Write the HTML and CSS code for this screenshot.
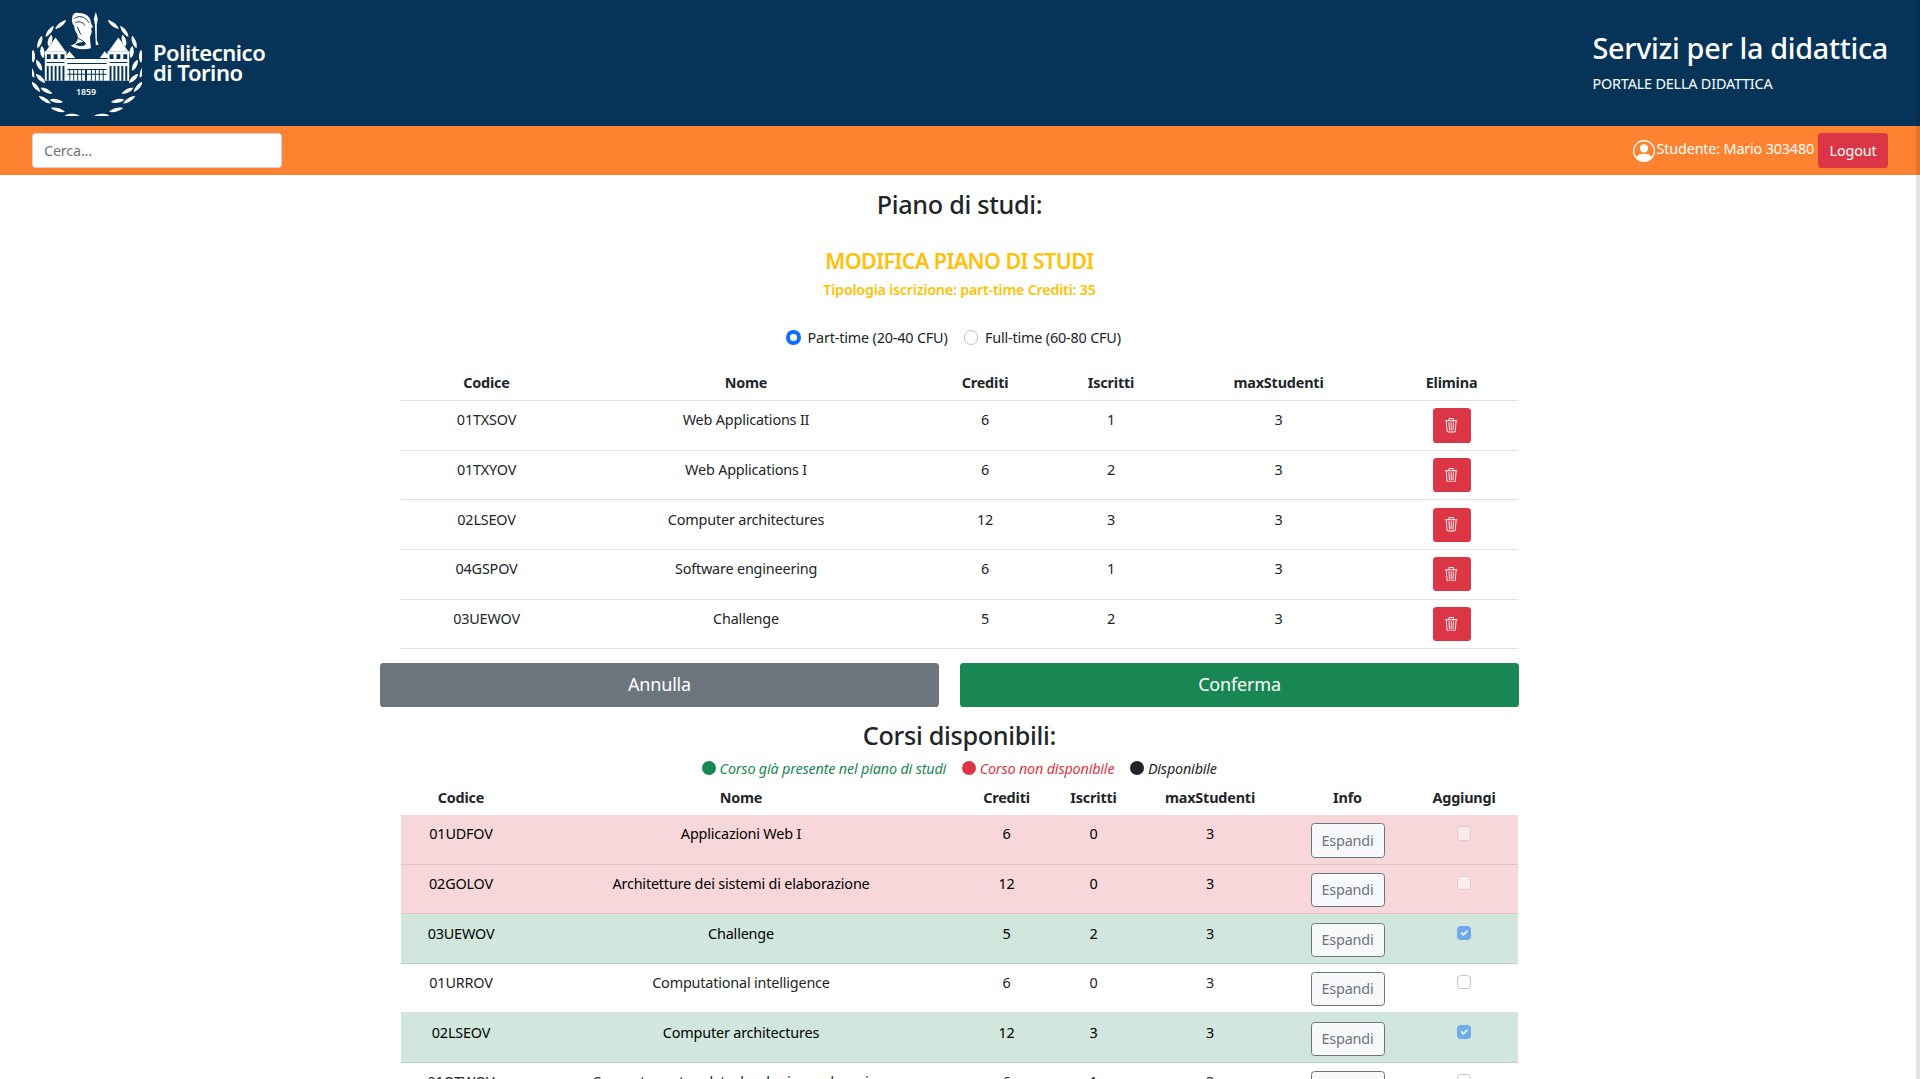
FILE: index.html
```html
<!DOCTYPE html>
<html lang="it">
<head>
	<meta charset="UTF-8">
	<title>Piano di studi</title>
	<link rel="stylesheet" href="styles.css">
</head>
<body>
	<header class="top">
		<div class="brand">
			<svg class="brand-mark" viewBox="0 0 112 106" aria-hidden="true">
				<defs>
					<path id="leafOut" d="M55 0C52-3 45-4 40-2C43 1 50 2 55 0Z"/>
					<path id="leafIn" d="M55 9C53 5 47 3 42 4C44 8 50 10 55 9Z"/>
					<g id="wreathSide">
						<use href="#leafOut" transform="rotate(36 55 55)"/>
						<use href="#leafOut" transform="rotate(50 55 55)"/>
						<use href="#leafIn" transform="rotate(58 55 55)"/>
						<use href="#leafOut" transform="rotate(66 55 55)"/>
						<use href="#leafIn" transform="rotate(76 55 55)"/>
						<use href="#leafOut" transform="rotate(84 55 55)"/>
						<use href="#leafIn" transform="rotate(94 55 55)"/>
						<use href="#leafOut" transform="rotate(102 55 55)"/>
						<use href="#leafIn" transform="rotate(112 55 55)"/>
						<use href="#leafOut" transform="rotate(120 55 55)"/>
						<use href="#leafIn" transform="rotate(130 55 55)"/>
						<use href="#leafOut" transform="rotate(138 55 55)"/>
						<use href="#leafIn" transform="rotate(148 55 55)"/>
						<use href="#leafOut" transform="rotate(156 55 55)"/>
						<use href="#leafOut" transform="rotate(172 55 55)"/>
					</g>
				</defs>
				<g fill="#fff" transform="translate(1 8) scale(1 .89)">
					<use href="#wreathSide"/>
					<use href="#wreathSide" transform="translate(110 0) scale(-1 1)"/>
				</g>
				<!-- minerva -->
				<path fill="#fff" d="M47 1C43 0 41 3 41 6C40 9 41 12 43 14C43 17 44 19 45 21C47 24 48 28 44 32C42 33 41 34 39 34C44 38 52 39 60 37L59 26L61 20L60 17L62 15L60 11C60 6 56 1 47 1Z"/>
				<path fill="none" stroke="#063459" stroke-width="1" d="M43 7C47 3 54 4 58 11M44 11C47 9 52 10 54 14M46 15C48 18 48 21 50 23M47 27C50 28 53 30 55 33"/>
				<path fill="#063459" d="M44 33C48 31 51 30 54 31L54 34C51 35 47 35 44 33Z"/>
				<path fill="#fff" d="M65 0L67 7L66 13L66 29L68 33L65 34L64 13L63 7Z"/>
				<!-- palazzo -->
				<g fill="#fff">
					<path d="M24 26L14 40H34ZM88 26L78 40H98ZM38 40L33 47H44ZM74 40L69 47H80Z"/>
					<path d="M13 40H35V70H13ZM77 40H99V70H77ZM35 48H77V70H35Z"/>
				</g>
				<g fill="#063459">
					<path d="M15 43h4v5h-4zM22 43h4v5h-4zM29 43h4v5h-4zM79 43h4v5h-4zM86 43h4v5h-4zM93 43h4v5h-4z"/>
					<path d="M15 51h18v1h-18zM79 51h18v1h-18zM36 52h40v1h-40zM36 58h40v1h-40zM36 63h40v1h-40z"/>
					<path d="M15 55h2v15h-2zM19 55h2v15h-2zM23 55h2v15h-2zM27 55h2v15h-2zM31 55h2v15h-2z"/>
					<path d="M79 55h2v15h-2zM83 55h2v15h-2zM87 55h2v15h-2zM91 55h2v15h-2zM95 55h2v15h-2z"/>
					<path d="M38 59h1v11h-1zM42 59h1v11h-1zM46 59h1v11h-1zM50 59h1v11h-1zM54 59h2v11h-2zM60 59h1v11h-1zM64 59h1v11h-1zM68 59h1v11h-1zM72 59h1v11h-1z"/>
				</g>
				<text class="brand-year" x="55" y="85" text-anchor="middle">1859</text>
			</svg>
			<div class="brand-name">Politecnico<br>di Torino</div>
		</div>
		<div class="top-title">
			<h2>Servizi per la didattica</h2>
			<p>PORTALE DELLA DIDATTICA</p>
		</div>
	</header>

	<nav class="bar">
		<input class="search" type="text" placeholder="Cerca...">
		<div class="user">
			<svg class="user-icon" viewBox="0 0 16 16" aria-hidden="true">
				<path fill="#fff" d="M11 6a3 3 0 1 1-6 0 3 3 0 0 1 6 0z"/>
				<path fill="#fff" fill-rule="evenodd" d="M0 8a8 8 0 1 1 16 0A8 8 0 0 1 0 8zm8-7a7 7 0 0 0-5.468 11.37C3.242 11.226 4.805 10 8 10s4.757 1.225 5.468 2.37A7 7 0 0 0 8 1z"/>
			</svg>
			<span class="user-name">Studente: Mario 303480</span>
			<button class="btn btn-red btn-logout">Logout</button>
		</div>
	</nav>

	<main class="page">
		<h3 class="heading">Piano di studi:</h3>
		<h4 class="edit-title">MODIFICA PIANO DI STUDI</h4>
		<h6 class="edit-sub">Tipologia iscrizione: part-time Crediti: 35</h6>

		<div class="plan-type">
			<label class="radio"><input type="radio" name="tipo" checked> Part-time (20-40 CFU)</label>
			<label class="radio"><input type="radio" name="tipo"> Full-time (60-80 CFU)</label>
		</div>

		<table class="tbl">
			<colgroup>
				<col class="p1"><col class="p2"><col class="p3"><col class="p4"><col class="p5"><col class="p6">
			</colgroup>
			<thead>
				<tr><th>Codice</th><th>Nome</th><th>Crediti</th><th>Iscritti</th><th>maxStudenti</th><th>Elimina</th></tr>
			</thead>
			<tbody>
				<tr><td>01TXSOV</td><td>Web Applications II</td><td>6</td><td>1</td><td>3</td><td class="act"><button class="btn btn-red btn-icon"><svg class="trash" viewBox="0 0 16 16"><use href="#trashIcon"/></svg></button></td></tr>
				<tr><td>01TXYOV</td><td>Web Applications I</td><td>6</td><td>2</td><td>3</td><td class="act"><button class="btn btn-red btn-icon"><svg class="trash" viewBox="0 0 16 16"><use href="#trashIcon"/></svg></button></td></tr>
				<tr><td>02LSEOV</td><td>Computer architectures</td><td>12</td><td>3</td><td>3</td><td class="act"><button class="btn btn-red btn-icon"><svg class="trash" viewBox="0 0 16 16"><use href="#trashIcon"/></svg></button></td></tr>
				<tr><td>04GSPOV</td><td>Software engineering</td><td>6</td><td>1</td><td>3</td><td class="act"><button class="btn btn-red btn-icon"><svg class="trash" viewBox="0 0 16 16"><use href="#trashIcon"/></svg></button></td></tr>
				<tr><td>03UEWOV</td><td>Challenge</td><td>5</td><td>2</td><td>3</td><td class="act"><button class="btn btn-red btn-icon"><svg class="trash" viewBox="0 0 16 16"><use href="#trashIcon"/></svg></button></td></tr>
			</tbody>
		</table>

		<div class="actions">
			<button class="btn btn-lg btn-grey">Annulla</button>
			<button class="btn btn-lg btn-green">Conferma</button>
		</div>

		<h3 class="heading heading-2">Corsi disponibili:</h3>
		<div class="legend">
			<span class="legend-item green"><i class="dot"></i>Corso già presente nel piano di studi</span>
			<span class="legend-item red"><i class="dot"></i>Corso non disponibile</span>
			<span class="legend-item dark"><i class="dot"></i>Disponibile</span>
		</div>

		<table class="tbl tbl-avail">
			<colgroup>
				<col class="c1"><col class="c2"><col class="c3"><col class="c4"><col class="c5"><col class="c6"><col class="c7">
			</colgroup>
			<thead>
				<tr class="no-line"><th>Codice</th><th>Nome</th><th>Crediti</th><th>Iscritti</th><th>maxStudenti</th><th>Info</th><th>Aggiungi</th></tr>
			</thead>
			<tbody>
				<tr class="row-red"><td>01UDFOV</td><td>Applicazioni Web I</td><td>6</td><td>0</td><td>3</td><td class="act"><button class="btn btn-light">Espandi</button></td><td class="act"><input class="check" type="checkbox" disabled></td></tr>
				<tr class="row-red"><td>02GOLOV</td><td>Architetture dei sistemi di elaborazione</td><td>12</td><td>0</td><td>3</td><td class="act"><button class="btn btn-light">Espandi</button></td><td class="act"><input class="check" type="checkbox" disabled></td></tr>
				<tr class="row-green"><td>03UEWOV</td><td>Challenge</td><td>5</td><td>2</td><td>3</td><td class="act"><button class="btn btn-light">Espandi</button></td><td class="act"><input class="check" type="checkbox" checked disabled></td></tr>
				<tr><td>01URROV</td><td>Computational intelligence</td><td>6</td><td>0</td><td>3</td><td class="act"><button class="btn btn-light">Espandi</button></td><td class="act"><input class="check" type="checkbox"></td></tr>
				<tr class="row-green"><td>02LSEOV</td><td>Computer architectures</td><td>12</td><td>3</td><td>3</td><td class="act"><button class="btn btn-light">Espandi</button></td><td class="act"><input class="check" type="checkbox" checked disabled></td></tr>
				<tr><td>01OTWOV</td><td>Computer network technologies and services</td><td>6</td><td>1</td><td>3</td><td class="act"><button class="btn btn-light">Espandi</button></td><td class="act"><input class="check" type="checkbox"></td></tr>
			</tbody>
		</table>
	</main>

	<div class="scroll-strip"></div>

	<svg class="sprite" aria-hidden="true">
		<defs>
			<path id="trashIcon" fill="currentColor" d="M6.5 1h3a.5.5 0 0 1 .5.5v1H6v-1a.5.5 0 0 1 .5-.5ZM11 2.5v-1A1.5 1.5 0 0 0 9.5 0h-3A1.5 1.5 0 0 0 5 1.5v1H1.5a.5.5 0 0 0 0 1h.538l.853 10.66A2 2 0 0 0 4.885 16h6.23a2 2 0 0 0 1.994-1.84l.853-10.66h.538a.5.5 0 0 0 0-1H11Zm1.958 1-.846 10.58a1 1 0 0 1-.997.92h-6.23a1 1 0 0 1-.997-.92L3.042 3.5h9.916Zm-7.487 1a.5.5 0 0 1 .528.47l.5 8.5a.5.5 0 0 1-.998.06L5 5.03a.5.5 0 0 1 .47-.53Zm5.058 0a.5.5 0 0 1 .47.53l-.5 8.5a.5.5 0 1 1-.998-.06l.5-8.5a.5.5 0 0 1 .528-.47ZM8 4.5a.5.5 0 0 1 .5.5v8.5a.5.5 0 0 1-1 0V5a.5.5 0 0 1 .5-.5Z"/>
		</defs>
	</svg>
</body>
</html>
```

FILE: styles.css
```css
* {
	box-sizing: border-box;
}
html {
	overflow: hidden;
	height: 100%;
}
body {
	margin: 0;
	height: 100%;
	overflow: hidden;
	background: #fff;
	color: #212529;
	font-family: "Noto Sans", "Open Sans", sans-serif;
	font-size: 14.4px;
	line-height: 21.6px;
	letter-spacing: -0.18px;
}
h2, h3, h4, h6, p {
	margin: 0;
	font-weight: 500;
}

/* testata */
.top {
	display: flex;
	justify-content: space-between;
	align-items: center;
	height: 126px;
	padding: 0 32px;
	background: #063459;
	color: #fff;
}
.brand {
	display: flex;
	align-items: center;
	gap: 11px;
	margin-top: 1px;
}
.brand-mark {
	width: 110px;
	height: 104px;
	display: block;
}
.brand-year {
	font-size: 9px;
	font-weight: 600;
	fill: #fff;
	letter-spacing: 0;
}
.brand-name {
	font-size: 22px;
	font-weight: 600;
	line-height: 20px;
	letter-spacing: -0.45px;
	margin-top: -4px;
}
.top-title h2 {
	font-size: 28.8px;
	line-height: 34.6px;
	margin-bottom: 7.2px;
	letter-spacing: -0.3px;
}
.top-title p {
	font-weight: 400;
}

/* barra arancione */
.bar {
	display: flex;
	justify-content: space-between;
	align-items: center;
	height: 49px;
	padding: 0 32px;
	background: #fe822f;
	color: #fff;
}
.search {
	width: 250px;
	height: 35px;
	padding: 0 11px;
	border: 1px solid #ced4da;
	border-radius: 3.6px;
	background: #fff;
	font: inherit;
	letter-spacing: inherit;
	color: #212529;
}
.search::placeholder {
	color: #6c757d;
	opacity: 1;
}
.user {
	display: flex;
	align-items: center;
}
.user-icon {
	width: 22px;
	height: 22px;
	margin-right: 2px;
}
.user-name {
	margin-right: 4px;
	margin-top: -4px;
}

/* bottoni */
.btn {
	display: inline-block;
	padding: 5.3px 11px;
	border: 1px solid transparent;
	border-radius: 3.6px;
	font: inherit;
	letter-spacing: inherit;
	vertical-align: top;
}
.btn-red {
	background: #dc3545;
	color: #fff;
}
.btn-logout {
	width: 70px;
	padding-left: 0;
	padding-right: 0;
}
.btn-icon {
	width: 38px;
	height: 34.2px;
	padding: 0;
}
.trash {
	display: block;
	width: 14.4px;
	height: 14.4px;
	margin: 0 auto;
}
.btn-light {
	width: 74px;
	padding-left: 0;
	padding-right: 0;
	border-color: #6c757d;
	background: #f8f9fa;
	color: #6c757d;
}
.btn-lg {
	height: 44px;
	padding: 4px 11px 6px;
	font-size: 18px;
}
.btn-grey {
	background: #6c757d;
	color: #fff;
}
.btn-green {
	background: #198754;
	color: #fff;
}

/* contenuto */
.page {
	width: 1117px;
	margin-left: 401px;
	padding-top: 14px;
	text-align: center;
}
.heading {
	font-size: 25.2px;
	line-height: 30.2px;
	letter-spacing: -0.3px;
}
.heading-2 {
	margin-top: 13px;
}
.edit-title {
	margin-top: 29px;
	font-size: 21.6px;
	font-weight: 600;
	line-height: 26px;
	letter-spacing: -0.65px;
	color: #ffc107;
}
.edit-sub {
	margin-top: 7.2px;
	font-size: 14.4px;
	font-weight: 600;
	line-height: 17.3px;
	letter-spacing: -0.25px;
	color: #ffc107;
}
.plan-type {
	display: flex;
	justify-content: center;
	gap: 16px;
	margin-top: 28px;
	margin-bottom: 16px;
	padding-right: 12px;
}
.radio {
	display: flex;
	align-items: center;
	gap: 7px;
}
.radio input {
	appearance: none;
	width: 14.4px;
	height: 14.4px;
	margin: 0;
	border: 1px solid #bfc3c7;
	border-radius: 50%;
	background: #fff;
}
.radio input:checked {
	border: 4px solid #0d6efd;
}

/* tabelle */
.tbl {
	width: 100%;
	table-layout: fixed;
	border-collapse: collapse;
	margin-bottom: 14.4px;
}
.tbl th, .tbl td {
	padding: 8.2px 7.2px 6.2px;
	vertical-align: top;
	border-bottom: 1px solid #dee2e6;
}
.tbl th {
	font-weight: 700;
	color: #212529;
}
.tbl .act {
	padding: 7.2px;
}
.tbl-avail .act {
	padding: 8.2px 7.2px 6.2px;
}
.tbl td:first-child, .tbl th:first-child {
	padding-left: 0;
	padding-right: 0;
}
.no-line th {
	border-bottom: 0;
}
.row-red td {
	background: #f8d7da;
	border-bottom-color: #dfc2c4;
	color: #000;
}
.row-green td {
	background: #d1e7dd;
	border-bottom-color: #bcd0c7;
	color: #000;
}
.p1 { width: 171px; }
.p2 { width: 348px; }
.p3 { width: 130px; }
.p4 { width: 122px; }
.p5 { width: 213px; }
.p6 { width: 133px; }
.c1 { width: 120px; }
.c2 { width: 440px; }
.c3 { width: 91px; }
.c4 { width: 83px; }
.c5 { width: 150px; }
.c6 { width: 125px; }
.c7 { width: 108px; }

.check {
	appearance: none;
	display: block;
	width: 14.4px;
	height: 14.4px;
	margin: 3px auto 0;
	border: 1px solid #bfc3c7;
	border-radius: 3.6px;
	background: #fff center / 100% no-repeat;
}
.check:disabled {
	opacity: .5;
}
.check:checked {
	border-color: #0d6efd;
	background-color: #0d6efd;
	background-image: url("data:image/svg+xml,%3csvg xmlns='http://www.w3.org/2000/svg' viewBox='0 0 20 20'%3e%3cpath fill='none' stroke='%23fff' stroke-linecap='round' stroke-linejoin='round' stroke-width='3' d='M6 10l3 3l6-6'/%3e%3c/svg%3e");
}

.actions {
	display: grid;
	grid-template-columns: 559px 559px;
	gap: 21px;
	margin-left: -21px;
}
.legend {
	display: flex;
	justify-content: center;
	gap: 16px;
	margin-top: 7px;
	font-style: italic;
}
.legend-item {
	display: flex;
	align-items: center;
	gap: 3.5px;
}
.dot {
	width: 14px;
	height: 14px;
	border-radius: 50%;
	background: currentColor;
}
.green { color: #198754; }
.red { color: #dc3545; }
.dark { color: #212529; }

.scroll-strip {
	position: fixed;
	top: 0;
	right: 0;
	bottom: 0;
	width: 4px;
	background: rgba(0, 0, 0, .1);
}
.sprite {
	position: absolute;
	width: 0;
	height: 0;
}
```
